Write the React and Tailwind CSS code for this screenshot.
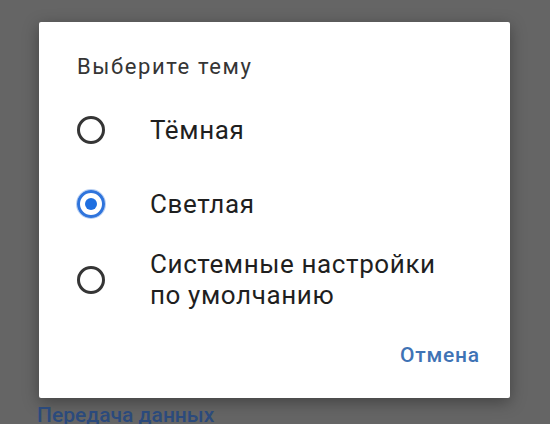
const font = { fontFamily: "Roboto, 'Noto Sans', sans-serif" };

function Radio({ checked }) {
  if (checked) {
    return (
      <div className="w-[28px] h-[28px] shrink-0 rounded-full border-[3px] border-[#2f74dc] shadow-[0_0_0_1px_#b9d0f3] flex items-center justify-center">
        <div className="w-[12px] h-[12px] rounded-full bg-[#1f6fe0]" />
      </div>
    );
  }
  return <div className="w-[28px] h-[28px] shrink-0 rounded-full border-[3px] border-[#353535]" />;
}

const options = [
  { label: ["Тёмная"], checked: false, h: "h-[74px]" },
  { label: ["Светлая"], checked: true, h: "h-[74px]" },
  { label: ["Системные настройки", "по умолчанию"], checked: false, h: "h-[78px]" },
];

export default function App() {
  return (
    <div style={font} className="w-[550px] h-[424px] bg-[#656565] overflow-hidden pt-[22px] pl-[39px]">
      <div className="w-[471px] h-[376px] bg-white rounded-[2px] shadow-[0_4px_16px_rgba(0,0,0,0.35)] flex flex-col pl-[38px] pr-[30px]">
        <div className="pt-[31px] text-[22px] leading-[28px] text-[#353535] tracking-[1.6px]">
          Выберите тему
        </div>
        <div className="mt-[12px] flex flex-col">
          {options.map((o, i) => (
            <div key={i} className={`${o.h} flex items-center`}>
              <Radio checked={o.checked} />
              <div className="ml-[45px] text-[26px] leading-[31px] text-[#1f1f1f] tracking-[0.6px]">
                {o.label.map((l) => (
                  <div key={l}>{l}</div>
                ))}
              </div>
            </div>
          ))}
        </div>
        <div className="mt-[17px] h-[40px] flex items-center justify-end">
          <span className="text-[21px] font-medium text-[#3f73b5] tracking-[0.8px]">Отмена</span>
        </div>
      </div>
      <div className="-ml-[2px] mt-[3px] text-[21px] font-medium text-[#2b4a7c] leading-[28px]">
        Передача данных
      </div>
    </div>
  );
}
